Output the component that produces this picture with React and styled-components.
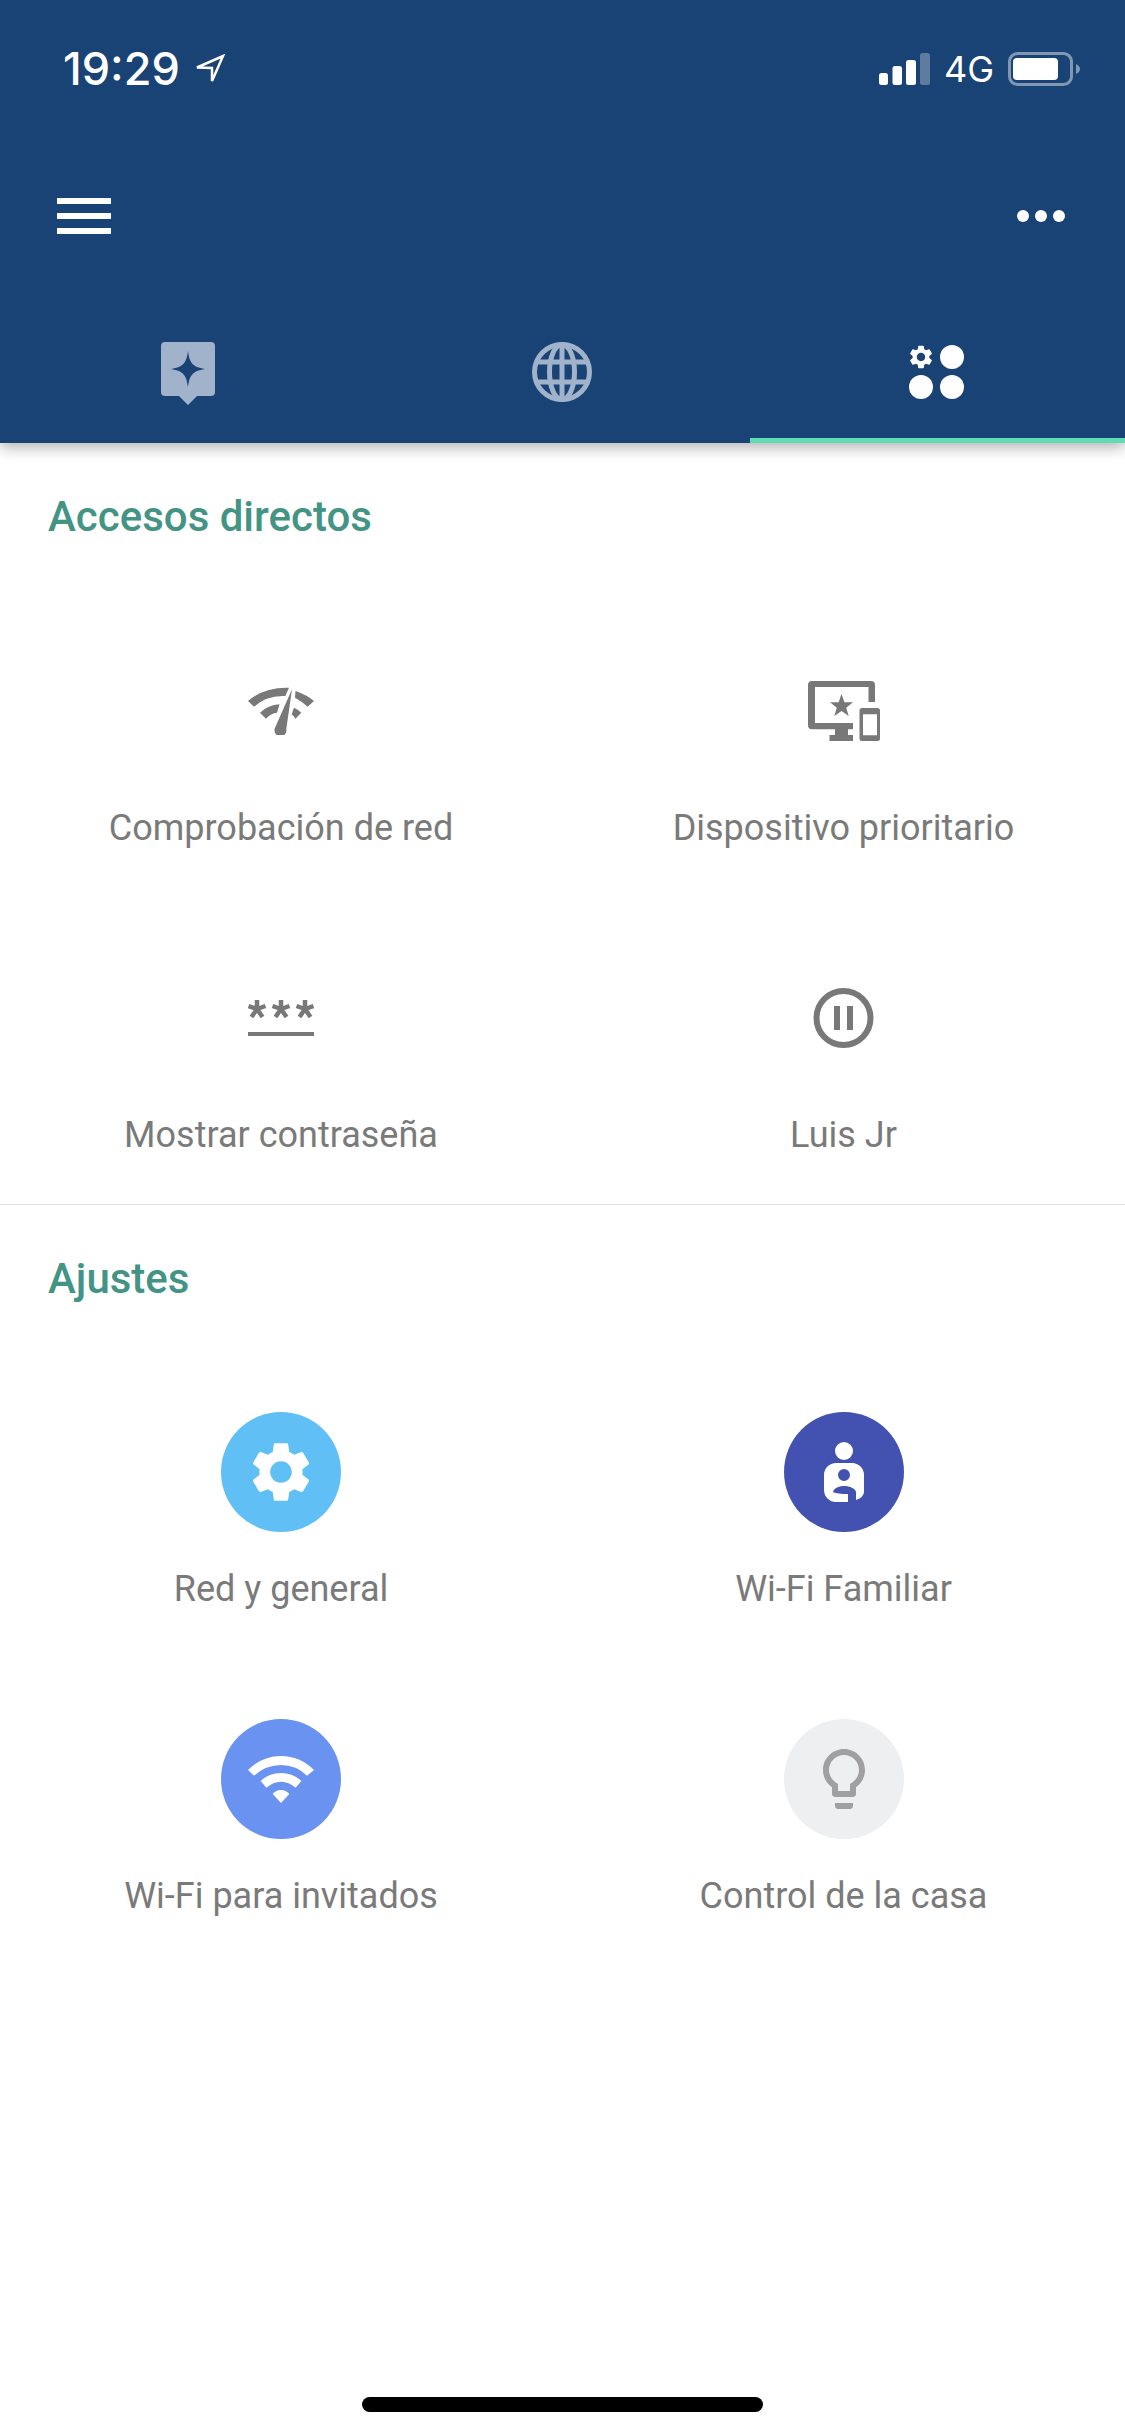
import React from "react";
import styled, { createGlobalStyle } from "styled-components";

const GlobalStyle = createGlobalStyle`
    html, body {
        margin: 0;
        padding: 0;
        background: #ffffff;
        font-family: Roboto, "Noto Sans", sans-serif;
    }
`;

const Page = styled.div`
    width: 1125px;
    height: 2436px;
    display: flex;
    flex-direction: column;
    background: #ffffff;
    overflow: hidden;
`;

const Header = styled.header`
    position: relative;
    z-index: 1;
    background: #1a4375;
    box-shadow: 0 4px 14px rgba(0, 0, 0, 0.32);
`;

const StatusBar = styled.div`
    height: 138px;
    display: flex;
    align-items: center;
    justify-content: space-between;
    padding: 0 45px 0 63px;
    color: #ffffff;
`;

const StatusGroup = styled.div`
    display: flex;
    align-items: center;
    gap: ${(p) => p.$gap || 0}px;
`;

const Time = styled.span`
    font-family: Inter, sans-serif;
    font-size: 45px;
    font-weight: 500;
    line-height: 44px;
`;

const Network = styled.span`
    font-family: Inter, sans-serif;
    font-size: 36px;
    font-weight: 400;
    line-height: 40px;
`;

const NavBar = styled.div`
    height: 156px;
    display: flex;
    align-items: center;
    justify-content: space-between;
    padding: 0 60px 0 57px;
`;

const Tabs = styled.div`
    display: grid;
    grid-template-columns: repeat(3, 1fr);
`;

const Tab = styled.div`
    height: 72px;
    padding: 42px 0 30px;
    display: flex;
    justify-content: center;
    align-items: center;
    border-bottom: 5px solid ${(p) => (p.$active ? "#5fdcb5" : "transparent")};
    color: ${(p) => (p.$active ? "#ffffff" : "#a0b3cb")};
`;

const Section = styled.section`
    padding: 52px 0 ${(p) => (p.$last ? 0 : 47)}px;
    border-bottom: ${(p) => (p.$last ? "none" : "1px solid #e4e4e4")};
`;

const SectionTitle = styled.h2`
    margin: 0 0 ${(p) => p.$gap}px 48px;
    font-size: 42px;
    line-height: 44px;
    font-weight: 500;
    color: #439485;
`;

const ItemGrid = styled.div`
    display: grid;
    grid-template-columns: 562px 563px;
    row-gap: 108px;
`;

const Item = styled.div`
    display: flex;
    flex-direction: column;
    align-items: center;
`;

const IconSlot = styled.div`
    width: 120px;
    height: 120px;
    display: flex;
    align-items: center;
    justify-content: center;
    border-radius: 50%;
    background: ${(p) => p.$bg || "transparent"};
    color: ${(p) => p.$color || "#787878"};
`;

const Label = styled.div`
    margin-top: 35px;
    font-size: 36px;
    line-height: 44px;
    color: #7a7a7a;
    white-space: nowrap;
`;

const HomeBar = styled.div`
    width: 401px;
    height: 15px;
    margin: auto auto 24px;
    border-radius: 8px;
    background: #000000;
`;

const GEAR =
    "M19.14 12.94c.04-.3.06-.61.06-.94 0-.32-.02-.64-.07-.94l2.03-1.58c.18-.14.23-.41.12-.61l-1.92-3.32c-.12-.22-.37-.29-.59-.22l-2.39.96c-.5-.38-1.03-.7-1.62-.94l-.36-2.54c-.04-.24-.24-.41-.48-.41h-3.84c-.24 0-.43.17-.47.41l-.36 2.54c-.59.24-1.13.57-1.62.94l-2.39-.96c-.22-.08-.47 0-.59.22L2.74 8.87c-.12.21-.08.47.12.61l2.03 1.58c-.05.3-.09.63-.09.94s.02.64.07.94l-2.03 1.58c-.18.14-.23.41-.12.61l1.92 3.32c.12.22.37.29.59.22l2.39-.96c.5.38 1.03.7 1.62.94l.36 2.54c.05.24.24.41.48.41h3.84c.24 0 .44-.17.47-.41l.36-2.54c.59-.24 1.13-.56 1.62-.94l2.39.96c.22.08.47 0 .59-.22l1.92-3.32c.12-.22.07-.47-.12-.61l-2.01-1.58zM12 15.6c-1.98 0-3.6-1.62-3.6-3.6s1.62-3.6 3.6-3.6 3.6 1.62 3.6 3.6-1.62 3.6-3.6 3.6z";

const LocationArrow = () => (
    <svg width="31" height="30" viewBox="0 0 31 30" fill="none" stroke="#fff" strokeWidth="2.5">
        <path d="M3 13.5 L29 2 L18 27 V14 Z" />
    </svg>
);

const SignalBars = () => (
    <svg width="51" height="32" viewBox="0 0 51 32" fill="#fff">
        <rect x="0" y="20" width="9" height="12" rx="2.5" />
        <rect x="13.5" y="13" width="9.5" height="19" rx="2.5" />
        <rect x="27" y="7" width="10" height="25" rx="2.5" />
        <rect x="41" y="0" width="10" height="32" rx="2.5" opacity="0.3" />
    </svg>
);

const Battery = () => (
    <svg width="72" height="34" viewBox="0 0 72 34" fill="none">
        <rect x="1.5" y="1.5" width="62" height="31" rx="8" stroke="#fff" strokeOpacity="0.45" strokeWidth="3" />
        <rect x="5" y="6" width="45" height="22" rx="4" fill="#fff" />
        <path d="M68 12 C70.5 13 72 15 72 17 C72 19 70.5 21 68 22 Z" fill="#fff" fillOpacity="0.45" />
    </svg>
);

const MenuIcon = () => (
    <svg width="54" height="36" viewBox="0 0 54 36" fill="#fff">
        <rect y="0" width="54" height="6" />
        <rect y="15" width="54" height="6" />
        <rect y="30" width="54" height="6" />
    </svg>
);

const MoreIcon = () => (
    <svg width="48" height="12" viewBox="0 0 48 12" fill="#fff">
        <circle cx="6" cy="6" r="6" />
        <circle cx="24" cy="6" r="6" />
        <circle cx="42" cy="6" r="6" />
    </svg>
);

const SparkTabIcon = () => (
    <svg width="54" height="72" viewBox="0 -6 54 72">
        <path
            fillRule="evenodd"
            fill="currentColor"
            d="M4 0 H50 A4 4 0 0 1 54 4 V50 A4 4 0 0 1 50 54 H36 L27 63 L18 54 H4 A4 4 0 0 1 0 50 V4 A4 4 0 0 1 4 0 Z M27 9 C28.5 20 31 25 44 27 C31 29 28.5 34 27 45 C25.5 34 23 29 10 27 C23 25 25.5 20 27 9 Z"
        />
    </svg>
);

const GlobeTabIcon = () => (
    <svg width="62" height="60" viewBox="0 0 62 60" fill="none" stroke="currentColor" strokeWidth="5">
        <circle cx="30" cy="30" r="27.5" />
        <ellipse cx="30" cy="30" rx="12.5" ry="27.5" />
        <path d="M30 2.5 V57.5 M5 20 H55 M5 40 H55" />
    </svg>
);

const ShortcutsTabIcon = () => (
    <svg width="57" height="54" viewBox="0 0 57 54" fill="currentColor">
        <svg x="-2" y="-2" width="28" height="28" viewBox="0 0 24 24">
            <path d={GEAR} />
        </svg>
        <circle cx="43" cy="12" r="12" />
        <circle cx="12" cy="42" r="12" />
        <circle cx="43" cy="42" r="12" />
    </svg>
);

const SpeedIcon = () => (
    <svg width="66" height="48" viewBox="0 0 66 48" fill="currentColor">
        <path d="M0 14 Q16 0 41 .7 L37.3 9 Q19 8 6 19.7 Z" />
        <path d="M47.5 4 Q59 8 66 14 L59.6 19.7 Q54 14.500 47 10.700 Z" />
        <path d="M12 25.700 Q20 18 31.500 17.300 L29 25.700 Q23 26 18 31.700 Z" />
        <path d="M46 20.700 Q50 22.500 53.300 25.700 L47.500 31.700 Q46 29 43.600 27.300 Z" />
        <path d="M44 2.300 L26.700 41.500 A6 6 0 1 0 38.300 42 Z" />
    </svg>
);

const PriorityDeviceIcon = () => (
    <svg width="72" height="60" viewBox="0 0 72 60" fill="currentColor">
        <path d="M4 0 H63 A4 4 0 0 1 67 4 V21 H60.500 V6 H7 V42 H45 V48.300 H40 V54 H45 V60 H21.500 V54 H27 V48.300 H4 A4 4 0 0 1 0 44.300 V4 A4 4 0 0 1 4 0 Z" />
        <path d="M33.500 13 L36.400 21.300 L45 21.300 L38.200 26.700 L40.700 35 L33.500 30 L26.300 35 L28.800 26.700 L22 21.300 L30.600 21.300 Z" />
        <path
            fillRule="evenodd"
            d="M54 27 H69.500 A2.500 2.500 0 0 1 72 29.500 V57.500 A2.500 2.500 0 0 1 69.500 60 H54 A2.500 2.500 0 0 1 51.500 57.500 V29.500 A2.500 2.500 0 0 1 54 27 Z M55 33.300 V54.300 H69 V33.300 Z"
        />
    </svg>
);

const Asterisk = ({ x }) => (
    <g transform={`translate(${x} 9)`}>
        <path d="M0 -9 V0 M0 0 L8.500 -3 M0 0 L-8.500 -3 M0 0 L5.500 8 M0 0 L-5.500 8" />
    </g>
);

const PasswordIcon = () => (
    <svg width="66" height="36" viewBox="0 0 66 36" fill="none" stroke="currentColor" strokeWidth="4.5">
        <Asterisk x={9} />
        <Asterisk x={33} />
        <Asterisk x={57} />
        <path d="M0 34 H66" strokeWidth="4" />
    </svg>
);

const PauseIcon = () => (
    <svg width="61" height="60" viewBox="0 0 61 60" fill="none">
        <circle cx="30.500" cy="30" r="27" stroke="currentColor" strokeWidth="6" />
        <rect x="21" y="18" width="6" height="24" fill="currentColor" />
        <rect x="34" y="18" width="6" height="24" fill="currentColor" />
    </svg>
);

const GearIcon = () => (
    <svg width="72" height="72" viewBox="0 0 24 24" fill="currentColor">
        <path d={GEAR} />
    </svg>
);

const FamilyIcon = () => (
    <svg width="40" height="60" viewBox="0 0 40 60" fill="currentColor">
        <circle cx="20" cy="9" r="9" />
        <path
            fillRule="evenodd"
            d="M12 21 H28 A12 12 0 0 1 40 33 V50 Q40 55 32 58 V52 A11.500 7 0 0 0 9 50 Q13 52 24 52 V60 H12 A12 12 0 0 1 0 48 V33 A12 12 0 0 1 12 21 Z M20 27 A6 6 0 1 0 20 39 A6 6 0 1 0 20 27 Z"
        />
    </svg>
);

const WifiIcon = () => (
    <svg width="66" height="47" viewBox="0 0 66 47" fill="currentColor">
        <path d="M0 14 Q14 0 33 0 Q52 0 66 14 L59 19.700 Q48 9 33 9 Q18 9 6 19.700 Z" />
        <path d="M12.600 25 Q21 17 33 17 Q45 17 53.400 25 L47.600 31.700 Q41 25.700 33 25.700 Q25 25.700 18.400 31.700 Z" />
        <path d="M24.700 38 Q28 34 33 34 Q38 34 41.300 38 L33 47 Z" />
    </svg>
);

const BulbIcon = () => (
    <svg width="72" height="72" viewBox="0 0 24 24" fill="currentColor">
        <path d="M9 21c0 .55.45 1 1 1h4c.55 0 1-.45 1-1v-1H9v1zm3-19C8.140 2 5 5.140 5 9c0 2.380 1.190 4.470 3 5.740V17c0 .55.45 1 1 1h6c.55 0 1-.45 1-1v-2.260c1.810-1.270 3-3.360 3-5.740 0-3.860-3.140-7-7-7zm2.850 11.100l-.85.6V16h-4v-2.300l-.85-.6C7.800 12.160 7 10.630 7 9c0-2.760 2.240-5 5-5s5 2.240 5 5c0 1.630-.8 3.160-2.150 4.100z" />
    </svg>
);

const shortcuts = [
    { label: "Comprobación de red", icon: <SpeedIcon /> },
    { label: "Dispositivo prioritario", icon: <PriorityDeviceIcon /> },
    { label: "Mostrar contraseña", icon: <PasswordIcon /> },
    { label: "Luis Jr", icon: <PauseIcon /> },
];

const settings = [
    { label: "Red y general", icon: <GearIcon />, bg: "#60bff4", color: "#ffffff" },
    { label: "Wi-Fi Familiar", icon: <FamilyIcon />, bg: "#4352b1", color: "#ffffff" },
    { label: "Wi-Fi para invitados", icon: <WifiIcon />, bg: "#6a92f0", color: "#ffffff" },
    { label: "Control de la casa", icon: <BulbIcon />, bg: "#eeeff1", color: "#a0a0a0" },
];

const App = () => {
    return <>
        <GlobalStyle />
        <Page>
            <Header>
                <StatusBar>
                    <StatusGroup $gap={14}>
                        <Time>19:29</Time>
                        <LocationArrow />
                    </StatusGroup>
                    <StatusGroup $gap={14}>
                        <SignalBars />
                        <Network>4G</Network>
                        <Battery />
                    </StatusGroup>
                </StatusBar>
                <NavBar>
                    <MenuIcon />
                    <MoreIcon />
                </NavBar>
                <Tabs>
                    <Tab><SparkTabIcon /></Tab>
                    <Tab><GlobeTabIcon /></Tab>
                    <Tab $active><ShortcutsTabIcon /></Tab>
                </Tabs>
            </Header>
            <Section>
                <SectionTitle $gap={112}>Accesos directos</SectionTitle>
                <ItemGrid>
                    {shortcuts.map((item) => (
                        <Item key={item.label}>
                            <IconSlot>{item.icon}</IconSlot>
                            <Label>{item.label}</Label>
                        </Item>
                    ))}
                </ItemGrid>
            </Section>
            <Section $last>
                <SectionTitle $gap={111}>Ajustes</SectionTitle>
                <ItemGrid>
                    {settings.map((item) => (
                        <Item key={item.label}>
                            <IconSlot $bg={item.bg} $color={item.color}>{item.icon}</IconSlot>
                            <Label>{item.label}</Label>
                        </Item>
                    ))}
                </ItemGrid>
            </Section>
            <HomeBar />
        </Page>
    </>;
};

export default App;
